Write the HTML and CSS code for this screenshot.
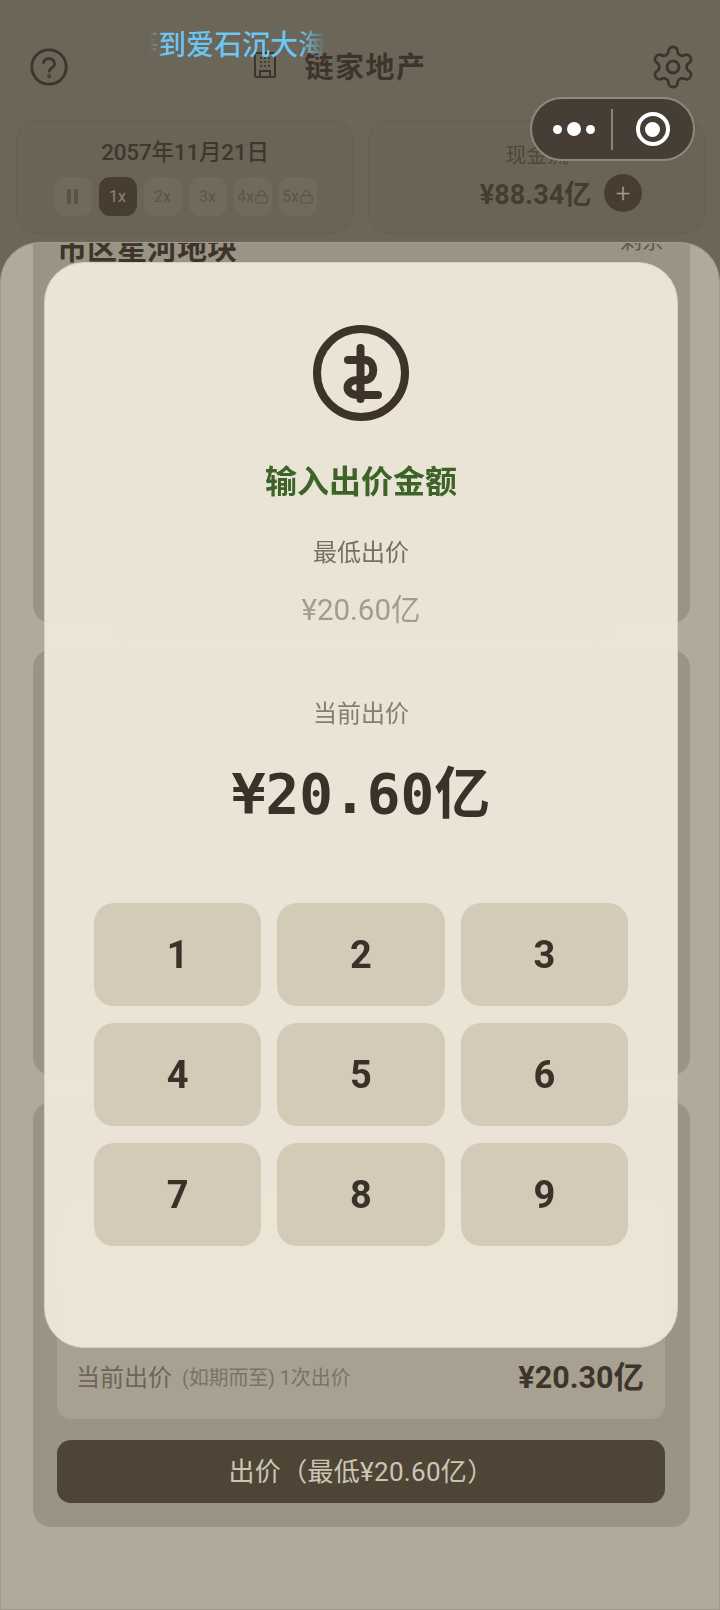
FILE: index.html
```html
<!DOCTYPE html>
<html lang="zh">
<head>
<meta charset="utf-8">
<title>链家地产</title>
<link rel="stylesheet" href="styles.css">
</head>
<body>
<div class="page">
  <header class="topbar">
    <svg class="icon-help" viewBox="0 0 38 38" fill="none" stroke="#3d352b" stroke-width="2.8" stroke-linecap="round">
      <circle cx="19" cy="19" r="17.2"/>
      <path d="M13.4 14.4a5.8 5.8 0 0 1 11.2 1.6c0 3.6-5.400 4-5.400 7.400"/>
      <circle cx="19.200" cy="28.200" r=".6"/>
    </svg>
    <div class="brand">
      <svg class="icon-building" viewBox="0 0 22 26" fill="none" stroke="#3d352b" stroke-width="2">
        <rect x="1" y="1" width="20" height="24" rx="1.5"/>
        <path d="M6 25v-6h10v6"/>
        <path d="M6 6h2M10 6h2M14 6h2M6 10h2M10 10h2M14 10h2M6 14h2M10 14h2M14 14h2" stroke-width="1.6"/>
      </svg>
      <span class="brand-name">链家地产</span>
    </div>
    <svg class="icon-gear" viewBox="0 0 24 24" fill="none" stroke="#3d352b" stroke-width="1.4" stroke-linecap="round" stroke-linejoin="round">
      <path d="M12.22 2h-.44a2 2 0 0 0-2 2v.18a2 2 0 0 1-1 1.73l-.43.25a2 2 0 0 1-2 0l-.15-.08a2 2 0 0 0-2.73.73l-.22.38a2 2 0 0 0 .73 2.73l.15.1a2 2 0 0 1 1 1.72v.51a2 2 0 0 1-1 1.74l-.15.09a2 2 0 0 0-.73 2.73l.22.38a2 2 0 0 0 2.73.73l.15-.08a2 2 0 0 1 2 0l.43.25a2 2 0 0 1 1 1.73V20a2 2 0 0 0 2 2h.44a2 2 0 0 0 2-2v-.18a2 2 0 0 1 1-1.73l.43-.25a2 2 0 0 1 2 0l.15.08a2 2 0 0 0 2.73-.73l.22-.39a2 2 0 0 0-.73-2.73l-.15-.08a2 2 0 0 1-1-1.74v-.5a2 2 0 0 1 1-1.74l.15-.09a2 2 0 0 0 .73-2.73l-.22-.38a2 2 0 0 0-2.73-.73l-.15.08a2 2 0 0 1-2 0l-.43-.25a2 2 0 0 1-1-1.73V4a2 2 0 0 0-2-2z"/>
      <circle cx="12" cy="12" r="3"/>
    </svg>
  </header>

  <section class="stats">
    <div class="stat">
      <div class="date">2057年11月21日</div>
      <div class="speeds">
        <div class="speed"><span class="pause"></span></div>
        <div class="speed speed-on">1x</div>
        <div class="speed">2x</div>
        <div class="speed">3x</div>
        <div class="speed speed-lock">4x<svg class="lock" viewBox="0 0 14 16" fill="none" stroke="#5a5346" stroke-width="1.2"><rect x="1" y="7" width="12" height="8" rx="1"/><path d="M4 7V4.500a3 3 0 0 1 6 0V7"/></svg></div>
        <div class="speed speed-lock">5x<svg class="lock" viewBox="0 0 14 16" fill="none" stroke="#5a5346" stroke-width="1.2"><rect x="1" y="7" width="12" height="8" rx="1"/><path d="M4 7V4.500a3 3 0 0 1 6 0V7"/></svg></div>
      </div>
    </div>
    <div class="stat">
      <div class="cash-label">现金流</div>
      <div class="cash-row">
        <span class="cash-value">¥88.34亿</span>
        <span class="plus">+</span>
      </div>
    </div>
  </section>

  <main class="sheet">
    <div class="list">
      <article class="card card-a">
        <div class="card-head"><span class="card-title">市区星河地块</span><span class="card-remain">剩余</span></div>
        <div class="ghost ghost-a1"></div>
        <div class="ghost ghost-a2"></div>
      </article>
      <article class="card card-b">
        <div class="ghost ghost-b1"></div>
      </article>
      <article class="card card-c">
        <div class="bid-box">
          <span class="bid-label">当前出价</span>
          <span class="bid-note">(如期而至) 1次出价</span>
          <span class="bid-value">¥20.30亿</span>
        </div>
        <div class="bid-btn">出价（最低¥20.60亿）</div>
      </article>
    </div>
  </main>

  <div class="marquee"><span class="marquee-text">等到爱石沉大海</span></div>

  <div class="capsule">
    <div class="capsule-dots"><i class="dot"></i><i class="dot dot-big"></i><i class="dot"></i></div>
    <div class="capsule-line"></div>
    <div class="capsule-target"><i class="target-core"></i></div>
  </div>

  <div class="modal">
    <svg class="coin" viewBox="0 0 96 96" fill="none" stroke="#3d3329" stroke-linecap="round">
      <circle cx="48" cy="48" r="44" stroke-width="8"/>
      <path d="M35 35H52C63 35 63 55 52 55H45C31 55 31 70 45 70H65M47.500 23V74" stroke-width="8"/>
    </svg>
    <h2 class="modal-title">输入出价金额</h2>
    <div class="modal-label">最低出价</div>
    <div class="modal-min">¥20.60亿</div>
    <div class="modal-label modal-label-cur">当前出价</div>
    <div class="modal-cur">¥20.60亿</div>
    <div class="keys">
      <div class="key">1</div><div class="key">2</div><div class="key">3</div>
      <div class="key">4</div><div class="key">5</div><div class="key">6</div>
      <div class="key">7</div><div class="key">8</div><div class="key">9</div>
    </div>
  </div>
</div>
</body>
</html>
```
FILE: styles.css
```css
* { box-sizing: border-box; }
html, body { margin: 0; padding: 0; }
body { width: 720px; height: 1610px; overflow: hidden; background: #6c6659; font-family: Roboto, "Noto Sans CJK SC", sans-serif; color: #3d352b; }
.page { position: relative; width: 720px; height: 1610px; display: flex; flex-direction: column; overflow: hidden; }

.topbar { height: 120px; padding: 47px 23px 0 30px; display: flex; justify-content: space-between; align-items: flex-start; flex: none; }
.icon-help { width: 38px; height: 38px; margin-top: 1px; }
.icon-gear { width: 48px; height: 48px; margin-top: -4px; }
.brand { display: flex; align-items: center; gap: 28px; margin: 0 0 0 -36px; height: 36px; }
.icon-building { width: 22px; height: 26px; }
.brand-name { font-size: 29px; font-weight: 700; letter-spacing: 1.5px; }

.stats { display: grid; grid-template-columns: 338px 338px; gap: 14px; padding: 0 16px; height: 114px; flex: none; }
.stat { border: 1px solid #655f52; border-radius: 22px; display: flex; flex-direction: column; align-items: center; background: #6a6457; }
.date { font-size: 22.5px; font-weight: 500; margin-top: 15px; line-height: 32px; color: #3f372b; letter-spacing: -.2px; }
.speeds { display: flex; gap: 7px; margin-top: 9px; }
.speed { width: 38px; height: 39px; border-radius: 11px; background: #6f6a5c; display: flex; align-items: center; justify-content: center; font-size: 16px; color: #5c5548; }
.speed-on { background: #473e31; color: #8d8676; }
.speed-lock { font-size: 16px; gap: 1px; white-space: nowrap; overflow: hidden; }
.lock { width: 13px; height: 15px; flex: none; }
.pause { width: 11px; height: 15px; border-left: 4px solid #5a5346; border-right: 4px solid #5a5346; }
.cash-label { font-size: 21px; line-height: 28px; margin-top: 20px; color: #4f4739; }
.cash-row { display: flex; align-items: center; gap: 13px; margin-top: 4px; margin-left: 48px; }
.cash-value { font-size: 27px; font-weight: 700; color: #453c30; }
.plus { width: 38px; height: 38px; border-radius: 50%; background: #473e31; color: #a49d8d; display: flex; align-items: center; justify-content: center; font-size: 26px; font-weight: 300; line-height: 1; }

.sheet { flex: 1; margin-top: 8px; border-radius: 40px 40px 0 0; border: 1px solid #a09a8a; background: #b1aa9a; overflow: hidden; padding: 0 29px 0 32px; }
.list { margin-top: -43px; display: flex; flex-direction: column; gap: 27px; }
.card { background: #9a9484; border-radius: 18px; position: relative; flex: none; }
.card-a { height: 423px; }
.card-b { height: 425px; }
.card-c { height: 425px; padding: 0 25px 24px 24px; display: flex; flex-direction: column; justify-content: flex-end; }
.card-head { display: flex; justify-content: space-between; padding: 29px 26px 0 24px; }
.card-title { font-size: 30px; font-weight: 700; color: #3d352b; line-height: 40px; }
.card-remain { font-size: 22px; color: #5f5849; line-height: 24px; }
.ghost { margin: 0 24px; border-radius: 12px; background: #8d8777; }
.ghost-a1 { height: 50px; margin-top: 22px; margin-right: 300px; }
.ghost-a2 { height: 60px; margin-top: 165px; }
.ghost-b1 { height: 70px; margin: 0 24px; position: relative; top: 310px; }

.bid-box { height: 220px; background: #a8a192; border-radius: 14px; display: flex; align-items: flex-end; padding: 0 21px 24px 19px; margin-bottom: 21px; }
.bid-label { font-size: 24px; color: #6c6558; line-height: 34px; }
.bid-note { font-size: 20px; color: #7a7364; line-height: 34px; margin-left: 10px; letter-spacing: -.15px; }
.bid-value { margin-left: auto; font-size: 30.5px; font-weight: 700; color: #3d352b; line-height: 34px; }
.bid-btn { height: 63px; border-radius: 14px; background: #4e4537; color: #cdc5b3; font-size: 26px; letter-spacing: .3px; display: flex; align-items: center; justify-content: center; padding-bottom: 4px; }

.marquee { position: absolute; left: 150px; top: 26px; width: 176px; height: 40px; overflow: hidden; white-space: nowrap; -webkit-mask-image: linear-gradient(90deg, transparent 0, #000 14px, #000 150px, transparent 176px); mask-image: linear-gradient(90deg, transparent 0, #000 14px, #000 150px, transparent 176px); }
.marquee-text { display: block; margin-left: -20px; font-size: 28px; font-weight: 500; line-height: 40px; color: #6cc5f2; }

.capsule { position: absolute; left: 530px; top: 97px; width: 165px; height: 64px; border-radius: 32px; background: #463e35; border: 2px solid #8f897a; display: flex; align-items: center; }
.capsule-dots { width: 79px; display: flex; justify-content: center; align-items: center; gap: 5px; padding-left: 5px; }
.dot { width: 9px; height: 9px; border-radius: 50%; background: #fff; }
.dot-big { width: 14px; height: 14px; }
.capsule-line { width: 1.500px; height: 41px; background: #8a8475; }
.capsule-target { width: 34px; height: 34px; border: 4px solid #fff; border-radius: 50%; margin-left: 23px; display: flex; align-items: center; justify-content: center; }
.target-core { width: 15px; height: 15px; border-radius: 50%; background: #fff; }

.modal { position: absolute; left: 44px; top: 262px; width: 634px; height: 1086px; border-radius: 40px; border: 1px solid #d5cfbf; background: rgba(236, 230, 215, .985); -webkit-backdrop-filter: blur(40px); backdrop-filter: blur(40px); padding: 62px 49px 0; display: flex; flex-direction: column; align-items: center; }
.coin { width: 96px; height: 96px; flex: none; margin-right: 1px; }
.modal-title { margin: 38px 0 0; font-size: 32px; line-height: 46px; font-weight: 700; color: #3d6329; }
.modal-label { margin-top: 31px; font-size: 24px; line-height: 34px; color: #77705f; }
.modal-label-cur { margin-top: 67px; color: #857e6f; }
.modal-min { margin-top: 20px; font-size: 29.5px; line-height: 40px; color: #a39c8c; }
.modal-cur { margin-top: 28px; font-family: "DejaVu Sans Mono", "Noto Sans CJK SC", monospace; font-size: 56px; font-weight: 700; line-height: 70px; color: #3a3228; }
.keys { margin-top: 74px; width: 534px; display: grid; grid-template-columns: repeat(3, 1fr); gap: 17px 16px; }
.key { height: 103px; border-radius: 20px; background: #d3cab8; display: flex; align-items: center; justify-content: center; font-size: 38px; font-weight: 700; color: #3a3228; }
```
